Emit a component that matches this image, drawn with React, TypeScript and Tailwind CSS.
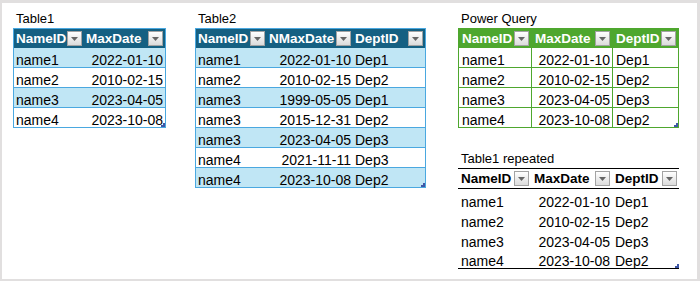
type Col = { label: string; w: string; right?: boolean };
type Variant = "blue" | "green" | "plain";

const font = { fontFamily: '"Liberation Sans", Arial, sans-serif' };

function DropBtn() {
  return (
    <span className="mr-[2px] mt-[2px] ml-auto flex h-[15px] w-[15px] shrink-0 items-center justify-center border border-[#a3a3a3] bg-linear-to-b from-white to-[#dcdcdc]">
      <svg width="7" height="4" viewBox="0 0 7 4">
        <path d="M0 0h7L3.5 4z" fill="#666666" />
      </svg>
    </span>
  );
}

function Handle() {
  return (
    <svg className="absolute bottom-0 right-0" width="4" height="4" viewBox="0 0 4 4">
      <path d="M4 0v4H0V2h2V0z" fill="#3f57a6" />
    </svg>
  );
}

function Table({
  title,
  cols,
  rows,
  variant,
}: {
  title: string;
  cols: Col[];
  rows: string[][];
  variant: Variant;
}) {
  const frame =
    variant === "blue"
      ? "border border-[#4aa8e0]"
      : variant === "green"
        ? "border border-[#4ea72e]"
        : "border-t border-b border-black";
  const head =
    variant === "blue"
      ? "bg-[#156082] text-white"
      : variant === "green"
        ? "bg-[#4ea72e] text-white"
        : "bg-white text-black border-b border-black";
  const rowLine =
    variant === "blue" ? "border-t border-[#4aa8e0]" : variant === "green" ? "border-t border-[#4ea72e]" : "";
  const pad = variant === "blue" ? "pl-[2px]" : "pl-[3px]";

  return (
    <div>
      <div className="h-[18px] pl-[3px] text-[13px] leading-[18px] text-black">{title}</div>
      <div className={frame}>
        <div className={`flex ${head}`}>
          {cols.map((c, j) => (
            <div
              key={j}
              className={`flex h-[19px] ${c.w} ${variant === "green" && j > 0 ? "border-l border-[#4ea72e]" : ""}`}
            >
              <span className={`self-end pb-[2px] text-[13.5px] font-bold leading-[14px] whitespace-nowrap ${pad}`}>
                {c.label}
              </span>
              <DropBtn />
            </div>
          ))}
        </div>
        {rows.map((r, i) => {
          const last = i === rows.length - 1;
          const band = variant === "blue" && i % 2 === 0 ? "bg-[#c0e6f5]" : "bg-white";
          return (
            <div
              key={i}
              className={`relative flex ${band} ${i > 0 ? rowLine : ""} ${
                variant === "plain" ? (last ? "h-[19px]" : "h-[20px]") : i > 0 ? "h-[20px]" : "h-[19px]"
              }`}
            >
              {r.map((v, j) => (
                <div
                  key={j}
                  className={`flex h-full items-end ${cols[j].w} ${
                    variant === "green" && j > 0 ? "border-l border-[#4ea72e]" : ""
                  } ${cols[j].right ? "justify-end pr-[2px]" : pad}`}
                >
                  <span className="text-[14px] leading-[14px] text-black">{v}</span>
                </div>
              ))}
              {last && <Handle />}
            </div>
          );
        })}
      </div>
    </div>
  );
}

const t1Rows = [
  ["name1", "2022-01-10"],
  ["name2", "2010-02-15"],
  ["name3", "2023-04-05"],
  ["name4", "2023-10-08"],
];

const t2Rows = [
  ["name1", "2022-01-10", "Dep1"],
  ["name2", "2010-02-15", "Dep2"],
  ["name3", "1999-05-05", "Dep1"],
  ["name3", "2015-12-31", "Dep2"],
  ["name3", "2023-04-05", "Dep3"],
  ["name4", "2021-11-11", "Dep3"],
  ["name4", "2023-10-08", "Dep2"],
];

const pqRows = [
  ["name1", "2022-01-10", "Dep1"],
  ["name2", "2010-02-15", "Dep2"],
  ["name3", "2023-04-05", "Dep3"],
  ["name4", "2023-10-08", "Dep2"],
];

export default function App() {
  return (
    <div className="h-[281px] w-[700px] bg-[#e1dfdf] pb-[2px] pl-[2px] pr-[3px] pt-[3px]" style={font}>
      <div className="flex h-full bg-white pl-[11px] pt-[7px]">
        <Table
          title="Table1"
          variant="blue"
          cols={[
            { label: "NameID", w: "w-[70px]" },
            { label: "MaxDate", w: "w-[81px]", right: true },
          ]}
          rows={t1Rows}
        />
        <div className="ml-[29px]">
          <Table
            title="Table2"
            variant="blue"
            cols={[
              { label: "NameID", w: "w-[71px]" },
              { label: "NMaxDate", w: "w-[86px]", right: true },
              { label: "DeptID", w: "w-[72px]" },
            ]}
            rows={t2Rows}
          />
        </div>
        <div className="ml-[32px] flex flex-col">
          <Table
            title="Power Query"
            variant="green"
            cols={[
              { label: "NameID", w: "w-[72px]" },
              { label: "MaxDate", w: "w-[81px]", right: true },
              { label: "DeptID", w: "w-[66px]" },
            ]}
            rows={pqRows}
          />
          <div className="mt-[22px]">
            <Table
              title="Table1 repeated"
              variant="plain"
              cols={[
                { label: "NameID", w: "w-[73px]" },
                { label: "MaxDate", w: "w-[81px]", right: true },
                { label: "DeptID", w: "w-[67px]" },
              ]}
              rows={pqRows}
            />
          </div>
        </div>
      </div>
    </div>
  );
}
